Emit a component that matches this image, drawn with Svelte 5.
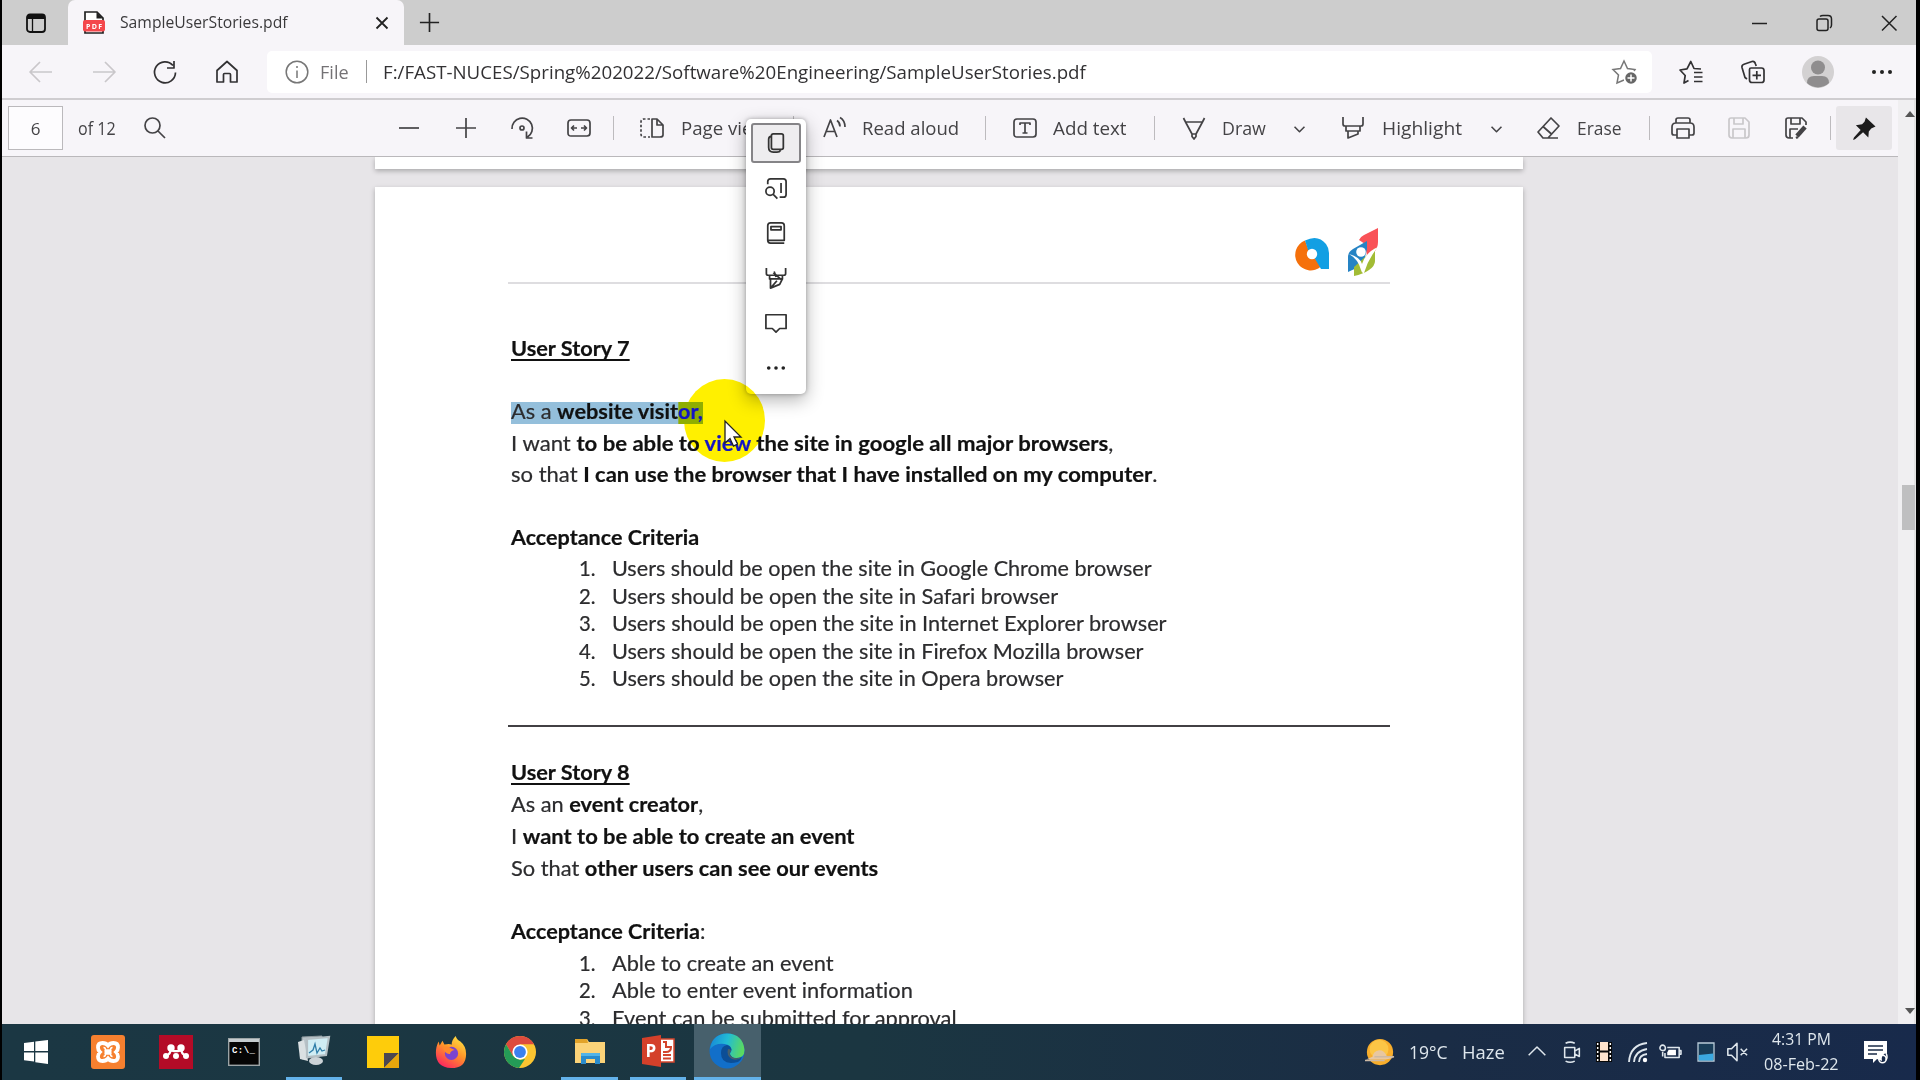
<script>
  // Squeezes or stretches a text run to a given width, and reserves that width in the flow.
  function fit(node, width) {
    const natural = node.offsetWidth;
    if (!natural) return;
    node.style.transform = `scaleX(${width / natural})`;
    node.style.marginRight = `${width - natural}px`;
  }

  const paths = {
    back: 'M23 12H1M11 2L1 12l10 10',
    forward: 'M1 12h22M13 2l10 10-10 10',
    reload: 'M22.500 12.500A10.500 10.500 0 1 1 20 5.500M21 1v7h-7',
    home: 'M2 10.500L12 1.500l10 9V22h-6.500v-7.500q0-1-1-1h-5q-1 0-1 1V22H2z',
    favs: 'M9.500 20.500L5 23l1.200-7.500L1 10l7-1.200L11.800 1.500 15 8.500l7 .5M15 12.500h8.500M15 17h8.500M15 21.500h8.500',
    collections: 'M6 19L4 17.500 1 7.500Q.5 5 3 4.200L11 1.500q2.500-.7 3.500 2.500l.7 2M10 8h10.500q2.500 0 2.500 2.500V20q0 2.500-2.500 2.500H11Q8.500 22.500 8.500 20V9.500Q8.500 8 10 8zM15.800 11v8.500M11.500 15.300h8.500',
    search: 'M9.500 2a7.500 7.500 0 1 0 0 15 7.500 7.500 0 0 0 0-15zM15 15l7 7',
    minus: 'M2 12h20',
    plus: 'M12 2v20M2 12h20',
    rotate: 'M2 13A10.200 10.200 0 1 1 17.500 21M16.500 15.500V22h6M12 10a2 2 0 1 0 0 4 2 2 0 0 0 0-4z',
    fitw: 'M4 4h16q3 0 3 3v10q0 3-3 3H4q-3 0-3-3V7q0-3 3-3zM4.500 12h5.500M7 9.500L4.500 12 7 14.500M19.500 12H14M17 9.500l2.500 2.500-2.500 2.500',
    addtext: 'M4 3h16q3 0 3 3v12q0 3-3 3H4q-3 0-3-3V6q0-3 3-3zM7 9V7h10v2M12 7v10M9.500 17h5',
    draw: 'M1.500 2l2 4h17l2-4M3.500 6L10 18v2.500l2 2.500 2-2.500V18l6.500-12M10 18h4',
    chevron: 'M5 9.500l7 7 7-7',
    highlight: 'M2 1v7q0 2 2 2h16q2 0 2-2V1M5 10v5h14v-5M7 15v7l10-4v-3',
    erase: 'M14 2l8 8-11 12H6l-5-6zM6 10.500l9 8M7 22h14',
    print: 'M5 7V4q0-2 2-2h10q2 0 2 2v3M6 19H3q-2 0-2-2v-6q0-4 4-4h14q4 0 4 4v6q0 2-2 2h-3M6 13h12v9H6z',
    save: 'M4 2h14l4 4v13q0 3-3 3H5q-3 0-3-3V4q0-2 2-2zM7 2v6h9V2M6 22v-9h12v9',
    saveas: 'M9 22H5q-3 0-3-3V4q0-2 2-2h14l4 4v3M7 2v6h9V2M6 22v-9h8',
    copy: 'M9 2h9q2 0 2 2v13q0 2-2 2H9q-2 0-2-2V4q0-2 2-2zM7 4.500Q4 5 4 8v9q0 5 5 5h4q3 0 4-2',
    define: 'M3 8V5q0-3 3-3h14q3 0 3 3v14q0 3-3 3h-4M17.500 6.500v11M5.500 11a4.500 4.500 0 1 0 0 9 4.500 4.500 0 0 0 0-9zM9 19l4.500 4.500',
    book: 'M6 1h12q3 0 3 3v16H3V4q0-3 3-3zM3 18v2q0 3 3 3h15M6.500 5h11v3.500h-11z',
    pen: 'M1.500 1v6q0 2 2 2h17q2 0 2-2V1M5 9v4h14V9M6 13v10l10-4 3-6M9 6l9 8M7 22l6-7M10 5l2 6',
    comment: 'M1 3h22v15h-7l-4 4-4-4H1z',
    cam: 'M4 7h11v11H4zM15 11l5-3v9l-5-3M5 2.500q5-2.500 10 0M5 22q5 2.500 10 0',
    up: 'M2 16L12 6l10 10',
    speaker: 'M2 8.500h4l6-6v19l-6-6H2zM16 8.500l7 7M23 8.500l-7 7'
  };

  const popup = ['copy', 'define', 'book', 'pen', 'comment'];

  const browsers = [
    ['Users should be open the site in Google Chrome browser', 540],
    ['Users should be open the site in Safari browser', 446],
    ['Users should be open the site in Internet Explorer browser', 555],
    ['Users should be open the site in Firefox Mozilla browser', 532],
    ['Users should be open the site in Opera browser', 451]
  ];
  const eventCriteria = [
    ['Able to create an event', 221],
    ['Able to enter event information', 301],
    ['Event can be submitted for approval', 345]
  ];
</script>

{#snippet icon(name, cls = '')}
  <svg class="ic {cls}" viewBox="0 0 24 24"><path d={paths[name]} /></svg>
{/snippet}

{#snippet dots(cls = '')}
  <svg class="dots {cls}" viewBox="0 0 22 6"><circle cx="3" cy="3" r="2" /><circle cx="11" cy="3" r="2" /><circle cx="19" cy="3" r="2" /></svg>
{/snippet}

{#snippet criteria(items)}
  <ol>
    {#each items as [text, width], i}
      <li><span class="num">{i + 1}.</span><span class="t" use:fit={width}>{text}</span></li>
    {/each}
  </ol>
{/snippet}

<div class="screen">
  <div class="window">
    <header class="tabs">
      <svg class="ws" viewBox="0 0 20 20"><rect x="1" y="1.500" width="18" height="17.500" rx="3" fill="none" stroke="#111" stroke-width="1.800" /><path d="M1 6V4q0-3 3-3h12q3 0 3 3v2z" fill="#111" /><path d="M6.500 6v12" stroke="#111" stroke-width="1.300" /></svg>
      <div class="tab">
        <svg class="pdf" viewBox="0 0 22 24"><path d="M2 22V1h12l6 6v15z" fill="#fff" stroke="#222" stroke-width="1.700" /><path d="M13.500 1v6.500H20z" fill="#222" /><rect y="9" width="22" height="11.500" rx="2" fill="#f4474c" /><text x="11" y="17.600" text-anchor="middle" textLength="16">PDF</text></svg>
        <span class="t title" use:fit={168}>SampleUserStories.pdf</span>
        <svg class="x" viewBox="0 0 12 12"><path d="M.5.5l11 11M11.500.5l-11 11" /></svg>
      </div>
      {@render icon('plus', 'newtab')}
      <svg class="wc" viewBox="0 0 18 18"><path d="M2 9.500h15" /></svg>
      <svg class="wc" viewBox="0 0 18 18"><rect x="2" y="5" width="11" height="11.500" rx="2" /><path d="M5 2.500Q6 1.500 8 1.500h5q3.500 0 3.500 3.500v6q0 2-1.500 3" /></svg>
      <svg class="wc" viewBox="0 0 18 18"><path d="M2 2l14.500 14.500M16.500 2L2 16.500" /></svg>
    </header>

    <nav class="nav">
      {@render icon('back', 'off')}
      {@render icon('forward', 'off')}
      {@render icon('reload')}
      {@render icon('home')}
      <div class="address">
        <svg class="info" viewBox="0 0 24 24"><circle cx="12" cy="12" r="10.800" /><path d="M12 10.500V18M12 6v2" /></svg>
        <span class="t file" use:fit={29}>File</span>
        <i class="bar"></i>
        <span class="t" use:fit={703}>F:/FAST-NUCES/Spring%202022/Software%20Engineering/SampleUserStories.pdf</span>
        <svg class="star" viewBox="0 0 26 26"><path d="M12 21l-7 3 1.500-8L1 10.500l7.500-1L12 2l3.500 7.500 7.500 1-1 1.500" /><circle cx="19" cy="19" r="6.500" /><path class="w" d="M19 15.500v7M15.500 19h7" /></svg>
      </div>
      {@render icon('favs')}
      {@render icon('collections')}
      <svg class="avatar" viewBox="0 0 32 32"><circle cx="16" cy="16" r="16" fill="#d3d1d2" /><circle cx="16" cy="11.500" r="7" fill="#8f8d8e" /><path d="M5 27q0-7 7-7h8q7 0 7 7a16 16 0 0 1-22 0" fill="#8f8d8e" /></svg>
      {@render dots()}
    </nav>

    <main>
      <div class="viewer">
        <div class="pdfbar">
          <div class="pageno">6</div>
          <span class="t" use:fit={38}>of 12</span>
          {@render icon('search')}
          {@render icon('minus')}
          {@render icon('plus')}
          {@render icon('rotate')}
          {@render icon('fitw')}
          <i class="sep"></i>
          <svg class="ic" viewBox="0 0 24 24"><path d="M12 3v18h8q3 0 3-2V9l-6-6zM17 3v6h6" /><path stroke-dasharray="2.500 2" d="M10 3H4Q1 3 1 6v12q0 3 3 3h6" /></svg>
          <span class="t" use:fit={86}>Page view</span>
          <i class="sep"></i>
          <svg class="ic" viewBox="0 0 24 24"><path d="M1 21L7.500 4 14 21M3.500 15.500h8M14 4.500q3 2 3 6M17 1.500q5 3 5 9.500" /></svg>
          <span class="t" use:fit={97}>Read aloud</span>
          <i class="sep"></i>
          {@render icon('addtext')}
          <span class="t" use:fit={74}>Add text</span>
          <i class="sep"></i>
          {@render icon('draw')}
          <span class="t" use:fit={44}>Draw</span>
          {@render icon('chevron', 'chev')}
          {@render icon('highlight')}
          <span class="t" use:fit={80}>Highlight</span>
          {@render icon('chevron', 'chev')}
          {@render icon('erase')}
          <span class="t" use:fit={45}>Erase</span>
          <i class="sep"></i>
          {@render icon('print')}
          {@render icon('save', 'off')}
          <svg class="ic" viewBox="0 0 24 24"><path d={paths.saveas} /><path d="M13 20L21 11" stroke-width="4.500" /><path d="M12 22l2-1" stroke-width="2.500" /></svg>
          <i class="sep"></i>
          <div class="pin">
            <svg viewBox="0 0 24 24"><path d="M13.500.5l10 9.500-4.500 2-2.500 3-.5 6.500L10.500 16 2.500 23 0 24l1-2.500L8 13.500 3 8.500 9.500 7.500 12 5z" /></svg>
          </div>
        </div>

        <div class="pages">
          <div class="sheet previous"></div>
          <article class="sheet">
            <div class="letterhead">
              <svg class="logo-a" viewBox="0 0 33 32"><path d="M9 2.500A15.500 15.500 0 1 0 25 28.500L18 19l-5.500-7z" fill="#f5700b" /><path d="M9 2.500Q22-4 30 6q3 4 3 9v16h-8L18.500 20 12 12z" fill="#129fe3" /><circle cx="16" cy="16" r="5.200" fill="#fff" /></svg>
              <svg class="logo-leaf" viewBox="0 0 32 48"><path d="M12 12Q13 9 17 7L31 0v14q0 7-5 11l-6 3-2-12z" fill="#f95257" /><path d="M1 29q0-5 5-8l14-8v8l-4 16L1 44z" fill="#2583c4" /><path d="M7 48V39L28 20v13q0 5-6 9t-15 6z" fill="#a2bc35" /><circle cx="14" cy="24" r="4.800" fill="#fff" /><path d="M2 26q11 3 13 10Q19 24 31 19 21 31 17 45q-2 1-3-3Q11 31 2 26z" fill="#fff" /></svg>
            </div>
            <section>
              <p><b class="t u" use:fit={119}>User Story 7</b></p>
              <p></p>
              <p><span class="t" use:fit={192}><span class="sel">As a <b>website visit<em>or,</em></b></span></span></p>
              <p><span class="t" use:fit={602}>I want <b>to be able to <em>view</em> the site in google all major browsers</b>,</span></p>
              <p><span class="t" use:fit={647}>so that <b>I can use the browser that I have installed on my computer</b>.</span></p>
              <p></p>
              <p><b class="t" use:fit={188}>Acceptance Criteria</b></p>
              {@render criteria(browsers)}
            </section>
            <section class="second">
              <p><b class="t u" use:fit={119}>User Story 8</b></p>
              <p><span class="t" use:fit={192}>As an <b>event creator</b>,</span></p>
              <p><span class="t" use:fit={344}>I <b>want to be able to create an event</b></span></p>
              <p><span class="t" use:fit={367}>So that <b>other users can see our events</b></span></p>
              <p></p>
              <p><span class="t" use:fit={194}><b>Acceptance Criteria</b>:</span></p>
              {@render criteria(eventCriteria)}
            </section>
          </article>
        </div>
      </div>
      <div class="scroll">
        <svg viewBox="0 0 10 6"><path d="M0 6l5-6 5 6z" /></svg>
        <i class="thumb"></i>
        <svg viewBox="0 0 10 6"><path d="M0 0h10L5 6z" /></svg>
      </div>
    </main>
  </div>

  <footer class="taskbar">
    <svg class="s24" viewBox="0 0 24 24"><path d="M0 3l10-1.300V11H0zM11.300 1.500L24 0v11H11.300zM0 12.500h10v9L0 20.300zM11.300 12.500H24V24l-12.700-1.700z" fill="#fff" /></svg>
    <svg class="s34" viewBox="0 0 34 34"><rect width="34" height="34" rx="3" fill="#f6802f" /><path d="M7 12.500Q7 8 11.500 8q3.500 0 5.500 2.500Q19 8 22.500 8 27 8 27 12.500q0 2.500-2 4.500 2 2 2 4.500 0 4.500-4.500 4.500-3.500 0-5.500-2.500Q15 26 11.500 26 7 26 7 21.500 7 19 9 17q-2-2-2-4.500z" fill="none" stroke="#fff" stroke-width="3.800" /><path d="M12.500 12.500q2 0 2 2.500h5q0-2.500 2-2.500M12.500 21.500q2 0 2-2.500h5q0 2.500 2 2.500" fill="none" stroke="#fff" stroke-width="1.500" /><path d="M13.500 17h7" stroke="#fff" stroke-width="4" /></svg>
    <svg class="s34" viewBox="0 0 34 34"><rect width="34" height="34" fill="#b40b27" /><g fill="#fff"><circle cx="12" cy="13" r="3.700" /><circle cx="22" cy="13" r="3.700" /><circle cx="7" cy="21" r="3" /><circle cx="17" cy="21" r="3" /><circle cx="27" cy="21" r="3" /></g><path d="M7 21q5-2 5-8 1 4 5 3 4 1 5-3 0 6 5 8" fill="none" stroke="#fff" stroke-width="2.200" /></svg>
    <svg class="cmd" viewBox="0 0 32 28"><rect x=".7" y=".7" width="30.600" height="26.600" fill="#050505" stroke="#9ca4a6" stroke-width="1.400" /><path d="M1 2.500h30" stroke="#c5cccf" stroke-width="3" /><text x="4" y="14.500" textLength="23">C:\_</text></svg>
    <div class="app on">
      <svg class="s34" viewBox="0 0 34 34"><path d="M5 3l20-1-2 20-18 3z" fill="#b8c2c8" stroke="#8d989d" /><path d="M1 8l6-2 4 21-8-2z" fill="#dbe1e3" /><path d="M10 5l22-2-3 18-19 2z" fill="#d0edf4" stroke="#b4bfc4" stroke-width="2.200" /><path d="M12 19l4-3 2-6 2 9 3-5 2 3 3-1" fill="none" stroke="#2e7da8" stroke-width="1.300" /><ellipse cx="19" cy="27" rx="7" ry="4" fill="#cbd2d6" /></svg>
    </div>
    <svg class="s32" viewBox="0 0 32 32"><path d="M0 0h32v32H0z" fill="#fecc0b" /><path d="M17 32V17h15z" fill="#4b4750" /><path d="M17 32l15-15v15z" fill="#e8a70c" /></svg>
    <svg class="s34" viewBox="0 0 34 36">
      <defs><linearGradient id="ff" x1=".8" y1="0" x2=".2" y2="1"><stop stop-color="#ffe445" /><stop offset=".45" stop-color="#ff9428" /><stop offset="1" stop-color="#fb1d63" /></linearGradient></defs>
      <path d="M22 1q1 4 5 6 6 5 6 13 0 15-16 15Q1 34 1 19 1 12 4 7l1 4 3-5 2 4q5-1 8 0-1-4 4-9z" fill="url(#ff)" /><circle cx="17.500" cy="19.500" r="7" fill="#7b43cf" /><path d="M8 13q6-2 9 1l4 2q-5 1-5 4-5 1-8-7z" fill="#ff8a2c" />
    </svg>
    <svg class="s34" viewBox="0 0 34 34"><circle cx="17" cy="17" r="16" fill="#fbc531" /><path d="M3 9.200A16 16 0 0 1 31 9.200H17L10 21z" fill="#dd4b3e" /><path d="M3 9.200L10 21l7 4 5-1-6 9A16 16 0 0 1 3 9.200z" fill="#249b57" /><circle cx="17" cy="17" r="7.600" fill="#fff" /><circle cx="17" cy="17" r="5.900" fill="#3b80ee" /></svg>
    <div class="app on wide">
      <svg class="s32" viewBox="0 0 32 32"><path d="M1 4h12l2 3h16v21H1z" fill="#fbd378" /><path d="M1 4h12l1 4H1z" fill="#e2a329" /><path d="M7 29V19q0-1 1-1h17q1 0 1 1v10h-5v-5h-9v5z" fill="#2a8ccd" /><path d="M7 19q0-1 1-1h17q1 0 1 1v2H7z" fill="#53b4e8" /></svg>
    </div>
    <div class="app on">
      <svg class="s34 ppt" viewBox="0 0 34 34"><path d="M16 5h17v23H16z" fill="#fff" stroke="#d3452c" stroke-width="1.500" /><path d="M22 8h3v5h5q0 5-5 5h-3M22 21h8M22 24.500h8" fill="none" stroke="#d3452c" stroke-width="2" /><path d="M1 4L20 1v32L1 30z" fill="#d4402a" /><text x="4.500" y="22.500">P</text></svg>
    </div>
    <div class="app on current">
      <svg class="s36" viewBox="0 0 36 36">
        <defs><linearGradient id="eg" x1="0" x2="1" y1=".2" y2=".4"><stop stop-color="#1787d8" /><stop offset=".5" stop-color="#22bcd4" /><stop offset="1" stop-color="#5bd960" /></linearGradient></defs>
        <circle cx="18" cy="18" r="17.500" fill="#126fc9" /><path d="M1 16Q3 1 18 .5 34 1 35.500 17q0 8-8 8-7 0-7-4 2-2 2-4 0-5-7-6Q6 10 1 16z" fill="url(#eg)" /><path d="M12 20q0-7 6-8 4 1 4.500 5-2 2-1.500 4 2 5 7 4 4 0 5-1-1 3-4 5-17 4-17-9z" fill="#0c4e96" /><path d="M19 16q3 0 3 2-2 2-1 4 3 4 9 3l3-1q-4 4-10 2-6-3-4-10z" fill="#46606c" />
      </svg>
    </div>
    <svg class="sun" viewBox="0 0 32 30"><circle cx="16" cy="15" r="14" fill="#f8ae2c" /><circle cx="15" cy="12" r="10" fill="#fcc646" /><path d="M1 23q4-2 7-3 1-6 7-7 6 0 8 6l8 2-9 2H8z" fill="#e8c7a0" /><path d="M0 24h21M10 20h21" stroke="#ccb9a4" stroke-width="1.500" /></svg>
    <span class="t" use:fit={39}>19°C</span>
    <span class="t" use:fit={43}>Haze</span>
    {@render icon('up', 'small')}
    {@render icon('cam', 'tray')}
    <svg class="drive" viewBox="0 0 16 20"><path d="M0 0h16v20H0z" fill="#080808" /><path d="M4 0h8v8.500H4zM4 10.500h8V19H4z" fill="#ffe3cd" /><path d="M1.700 1v19M14.300 1v19" stroke="#fff" stroke-width="1.500" stroke-dasharray="2 2" /></svg>
    <svg class="ic small" viewBox="0 0 20 20"><path d="M1 20Q2 3 19 1M6 20q1-11 13-13M11 20q0-7 8-8" /><circle cx="17" cy="18" r="2.200" fill="#fff" stroke="none" /></svg>
    <svg class="ic tray" viewBox="0 0 24 24"><path d="M9 7h13v11H6.500v-5M22 10.500h2v4h-2M4 12v5" /><circle cx="4" cy="7.500" r="3" /><path d="M10.500 9.500h8v6H9v-3z" fill="#fff" stroke="none" /></svg>
    <svg class="drive wider" viewBox="0 0 18 20"><path d="M1 1h16v18H1z" fill="#193d58" stroke="#b9cbd8" stroke-width="1.300" /><path d="M1.700 13l14.600-1.500v7H1.700z" fill="#3ba9e0" /></svg>
    {@render icon('speaker', 'tray')}
    <div class="clock"><span class="t" use:fit={59}>4:31 PM</span><span class="t" use:fit={75}>08-Feb-22</span></div>
    <svg class="note" viewBox="0 0 24 24"><path d="M0 1h23v12a6 6 0 0 0-5 8l-5-2-4 4v-4H0z" fill="#fff" /><path d="M4 6h15M4 10h15M4 14h9" stroke="#1a2b47" stroke-width="1.600" /><circle cx="18.500" cy="19" r="3.700" fill="none" stroke="#fff" stroke-width="1.500" /><path d="M22 13q2 4 0 7" fill="none" stroke="#fff" stroke-width="1.500" /></svg>
  </footer>

  <div class="popup">
    {#each popup as name, i}
      <div class="cell" class:active={i === 0}>{@render icon(name)}</div>
    {/each}
    <div class="cell">{@render dots('sm')}</div>
  </div>
  <div class="spot"></div>
  <svg class="cursor" viewBox="0 0 18 28"><path d="M1 1v22l5-4.500L9.500 26l4-2-3.500-7h7z" fill="#fff" stroke="#222" stroke-width="1.300" /></svg>
</div>

<style>
  :global(body) { background: #000; overflow: hidden; }
  .screen { position: relative; width: 1920px; height: 1080px; box-sizing: border-box; background: #000; font-family: 'Open Sans', 'Noto Sans', sans-serif; overflow: hidden; color: #3b3a3c; display: flex; flex-direction: column; }
  .window { height: 1024px; margin: 0 4px 0 2px; display: flex; flex-direction: column; background: #f7f5f9; }
  svg { display: block; flex: none; overflow: visible; }
  .t { display: inline-block; white-space: pre; transform-origin: 0 50%; justify-self: start; flex: none; }
  .ic { width: 24px; height: 24px; fill: none; stroke: currentColor; stroke-width: 1.7; stroke-linejoin: round; }
  .off { color: #c9c7ca; }
  .dots { width: 22px; height: 6px; fill: #222; }

  .tabs { height: 45px; flex: none; display: grid; grid-template-columns: 42px 350px 1332px 65px 65px auto; align-items: center; padding-left: 24px; box-sizing: border-box; background: #cdcdcd; }
  .ws { width: 20px; height: 20px; }
  .tab { width: 336px; height: 45px; display: flex; align-items: center; background: #f7f5f9; border-radius: 7px 7px 0 0; padding: 0 16px 0 15px; box-sizing: border-box; font-size: 16px; }
  .pdf { width: 22px; height: 24px; }
  .pdf text { font-size: 7px; font-weight: 700; fill: #fff; }
  .title { margin-left: 15px; padding-bottom: 2px; }
  .x { width: 12px; height: 12px; margin-left: auto; stroke: #222; stroke-width: 1.8; }
  .newtab { width: 23px; height: 23px; color: #222; }
  .wc { width: 18px; height: 18px; fill: none; stroke: #222; stroke-width: 1.5; }

  .nav { height: 53px; flex: none; display: grid; grid-template-columns: 63px 61px 62px 52px 1412px 62px 61px 69px auto; align-items: center; padding-left: 27px; color: #323133; border-bottom: 2px solid #cfcdd0; }
  .address { width: 1385px; height: 42px; background: #fff; border-radius: 5px; display: flex; align-items: center; box-sizing: border-box; padding: 0 14px 0 18px; font-size: 18.7px; }
  .address .t { padding-bottom: 1px; }
  .info { width: 24px; height: 24px; fill: none; stroke: #777; stroke-width: 1.5; }
  .file { margin-left: 11px; color: #747275; }
  .bar { width: 1px; height: 23px; background: #999; margin: 0 16px 0 17px; }
  .star { width: 26px; height: 26px; fill: none; stroke: #777; stroke-width: 1.5; margin-left: auto; }
  .star circle { fill: #666; stroke: #fff; }
  .star .w { stroke: #fff; }
  .avatar { width: 32px; height: 32px; }

  main { flex: 1; min-height: 0; display: grid; grid-template-columns: 1896px 18px; }
  .viewer { display: flex; flex-direction: column; min-height: 0; }
  .pdfbar { height: 56px; flex: none; border-bottom: 1px solid #bab8bb; display: grid; align-items: center; padding-left: 6px; color: #444346; font-size: 17.8px;
    grid-template-columns: 70px 65px 254px 57px 56px 57px 46px 27px 41px 112px 30px 39px 123px 28px 40px 101px 28px 40px 69px 50px 41px 106px 49px 40px 72px 22px 56px 57px 46px 6px auto; }
  .pageno { width: 55px; height: 44px; box-sizing: border-box; border: 1.5px solid #bbb9bc; background: #fdfcfe; display: flex; align-items: center; justify-content: center; font-size: 17px; }
  .sep { width: 1px; height: 24px; background: #bdbbbe; }
  .chev { width: 17px; height: 17px; stroke-width: 2.2; }
  .pin { width: 56px; height: 44px; background: #e8e6e9; border-radius: 3px; display: flex; align-items: center; justify-content: center; }
  .pin svg { width: 23px; height: 23px; fill: #1c1c1c; }

  .pages { flex: 1; min-height: 0; overflow: hidden; background: #e7e5e8; display: flex; flex-direction: column; padding-left: 373px; gap: 18px; }
  .sheet { width: 1148px; flex: none; background: #fff; box-shadow: 0 2px 5px #00000045; box-sizing: border-box; padding: 0 133px; }
  .previous { height: 12px; }
  .letterhead { height: 97px; box-sizing: border-box; border-bottom: 2px solid #dedde0; display: flex; justify-content: flex-end; align-items: flex-end; padding: 0 11px 6px 0; gap: 18px; }
  .logo-a { width: 33px; height: 32px; margin-bottom: 6px; }
  .logo-leaf { width: 32px; height: 48px; }
  /* Document text stays above the pointer spot so coloured words remain legible. */
  section { position: relative; z-index: 3; font-family: Lato, sans-serif; font-size: 20.3px; font-variant-ligatures: none; color: #2c2c2e; padding: 49.3px 3px 0; -webkit-text-stroke: .2px currentColor; }
  p { margin: 0; height: 31.5px; line-height: 31.5px; }
  b { font-weight: 700; color: #111; }
  em { font-style: normal; color: #1414c4; }
  .u { text-decoration: underline; text-decoration-thickness: 2px; text-underline-offset: 3px; text-decoration-skip-ink: none; }
  .sel { display: inline-block; line-height: 18px; padding-bottom: 4px; background: #94bfdb; }
  .sel em { display: inline-block; background: #8fae00; padding-bottom: 4px; margin-bottom: -4px; }
  ol { list-style: none; margin: 1.500px 0 0; padding: 0 0 32px 68px; }
  li { height: 27.5px; line-height: 27.5px; display: flex; }
  .num { width: 33px; flex: none; }
  .second { padding-top: 30.6px; border-top: 2px solid #424044; }
  .second::before { content: none; }
  .second p { height: 31.8px; line-height: 31.8px; }

  .scroll { background: #f0eff1; display: flex; flex-direction: column; align-items: center; padding: 11px 0 10px 3px; box-sizing: border-box; min-height: 0; border-right: 2px solid #e2e2e2; }
  .scroll svg { width: 10px; height: 6px; fill: #555; margin-left: 4px; }
  .thumb { width: 13px; height: 45px; background: #bfbfc0; margin: 368px 0 auto 2px; }

  .taskbar { position: relative; z-index: 4; height: 56px; margin: 0 4px 0 2px; box-sizing: border-box; padding-left: 22px; display: grid; align-items: center; color: #dfe7ed; font-size: 18px; background: linear-gradient(90deg, #1b3743 0, #1b3641 45%, #1a2c45 75%, #182a4b 100%);
    grid-template-columns: 67px 68px 69px 58px 81px 67px 69px 58px 69px 64px 671px 44px 53px 65px 34px 35px 32px 31px 38px 29px 38px 100px auto; }
  .s24 { width: 24px; height: 24px; }
  .s32 { width: 32px; height: 32px; }
  .s34 { width: 34px; height: 34px; }
  .s36 { width: 36px; height: 36px; }
  .cmd { width: 32px; height: 28px; }
  .cmd text { font: 700 9px 'Liberation Mono', monospace; fill: #fff; }
  .ppt text { font-size: 17px; font-weight: 700; fill: #fff; }
  .app { width: 56px; height: 56px; box-sizing: border-box; display: flex; align-items: center; justify-content: center; border-bottom: 3px solid #63b2ea; padding-top: 1px; }
  .wide { width: 57px; }
  .current { width: 67px; background: #47606c; }
  .current svg { margin-right: 2px; }
  .sun { width: 30px; height: 30px; }
  .small { width: 20px; height: 20px; stroke-width: 1.8; }
  .tray { width: 22px; height: 22px; }
  .drive { width: 16px; height: 20px; }
  .wider { width: 18px; }
  .clock { width: 75px; display: flex; flex-direction: column; align-items: center; font-size: 15.5px; line-height: 25px; }
  .note { width: 24px; height: 24px; }

  .popup { position: absolute; z-index: 1; left: 746px; top: 119px; width: 60px; height: 275px; background: #fff; border-radius: 5px; box-shadow: 0 6px 18px #0000004d, 0 0 4px #0000004a; display: flex; flex-direction: column; align-items: center; padding-top: 4px; gap: 5px; box-sizing: border-box; color: #333; }
  .cell { width: 50px; height: 40px; box-sizing: border-box; display: flex; align-items: center; justify-content: center; }
  .popup .ic { width: 22px; height: 22px; stroke-width: 1.9; }
  .active { background: #eeedef; border: 2px solid #858487; border-radius: 3px; }
  .sm { width: 20px; }
  .spot { position: absolute; z-index: 2; left: 684px; top: 379px; width: 81px; height: 83px; border-radius: 50%; background: #fff000; mix-blend-mode: multiply; }
  .cursor { position: absolute; z-index: 5; left: 724px; top: 420px; width: 18px; height: 28px; }
</style>
